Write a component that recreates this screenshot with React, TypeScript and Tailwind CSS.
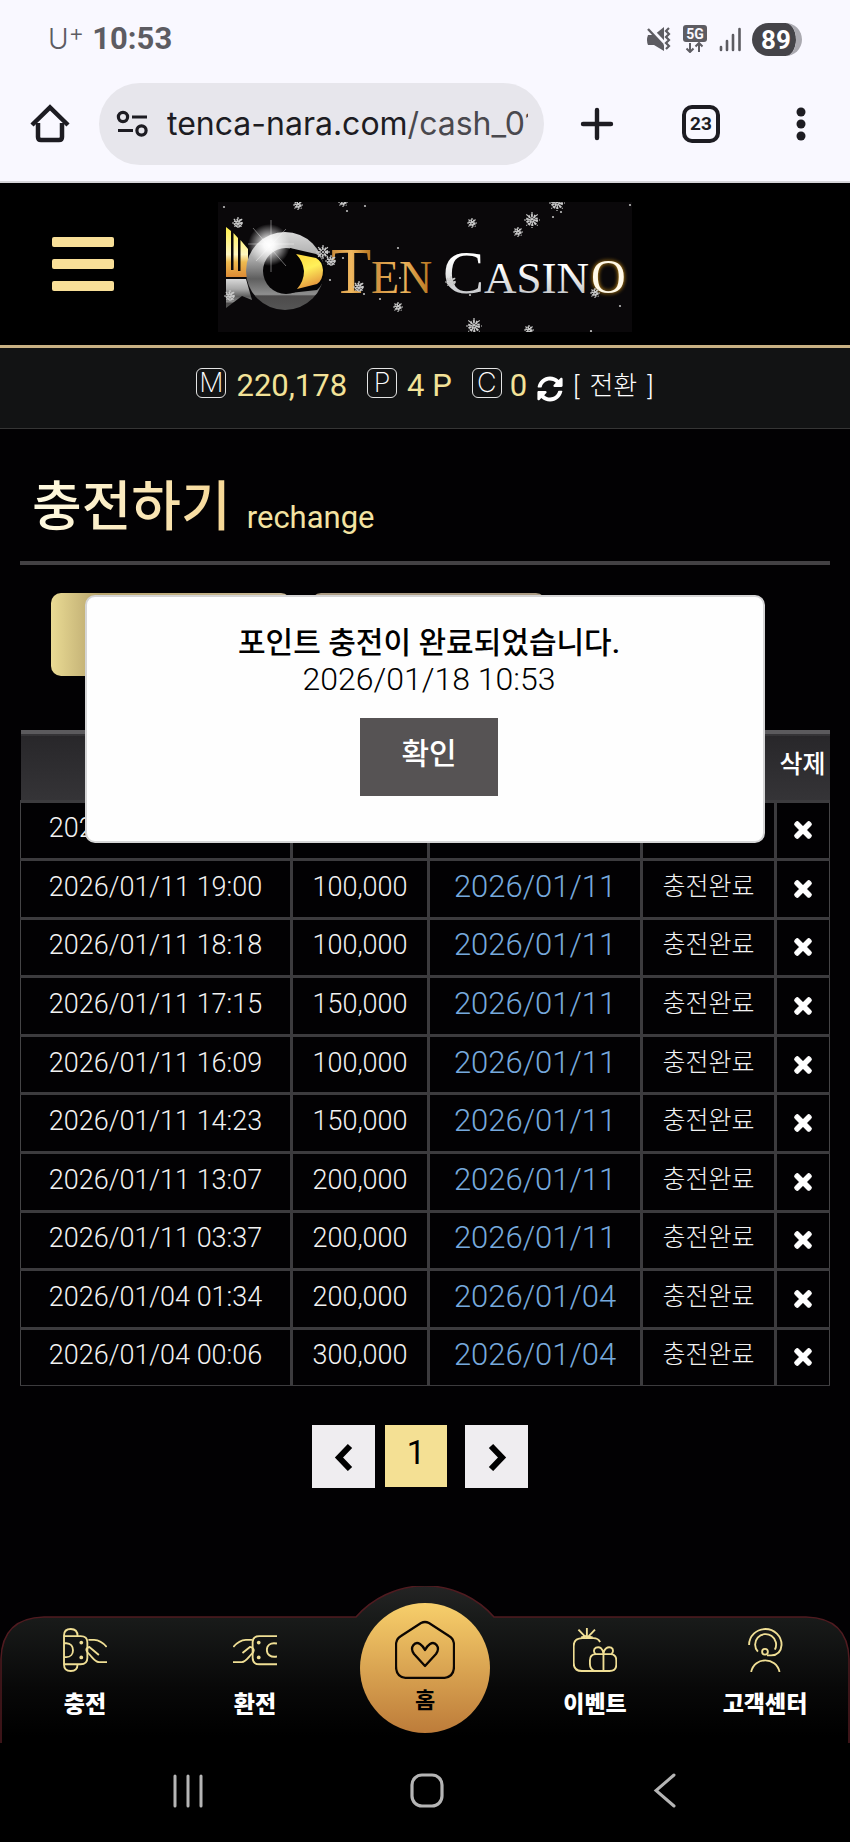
import type { ReactNode } from "react";
import { FaSyncAlt, FaTimes } from "react-icons/fa";

type Row = { requested: string; amount: string; processed: string; status: string };

const rows: Row[] = [
  { requested: "2026/01/18 10:53", amount: "", processed: "", status: "" },
  { requested: "2026/01/11 19:00", amount: "100,000", processed: "2026/01/11", status: "충전완료" },
  { requested: "2026/01/11 18:18", amount: "100,000", processed: "2026/01/11", status: "충전완료" },
  { requested: "2026/01/11 17:15", amount: "150,000", processed: "2026/01/11", status: "충전완료" },
  { requested: "2026/01/11 16:09", amount: "100,000", processed: "2026/01/11", status: "충전완료" },
  { requested: "2026/01/11 14:23", amount: "150,000", processed: "2026/01/11", status: "충전완료" },
  { requested: "2026/01/11 13:07", amount: "200,000", processed: "2026/01/11", status: "충전완료" },
  { requested: "2026/01/11 03:37", amount: "200,000", processed: "2026/01/11", status: "충전완료" },
  { requested: "2026/01/04 01:34", amount: "200,000", processed: "2026/01/04", status: "충전완료" },
  { requested: "2026/01/04 00:06", amount: "300,000", processed: "2026/01/04", status: "충전완료" },
];

function StatusBar() {
  return (
    <div className="flex h-[78px] items-center justify-between pr-12 pl-12 text-[#5d5c62]">
      <div className="flex items-center gap-2">
        <span className="flex items-start font-['Inter'] text-[28px] leading-8 font-light">
          U
          <sup className="top-0 text-[24px] leading-5">+</sup>
        </span>
        <span className="text-[31px] leading-8 font-bold">10:53</span>
      </div>
      <div className="flex items-center gap-2.5">
        <svg width="26" height="26" viewBox="0 0 26 26" fill="none" aria-hidden="true">
          <path d="M2 9 H8 L18 1 V25 L8 19 H2 Q0 14 2 9 Z" fill="#5d5c62" />
          <path d="M1 -1 L22 21" stroke="#f9f8ff" strokeWidth="3.500" />
          <path d="M2 3 L17 19" stroke="#5d5c62" strokeWidth="2.400" />
          <path d="M23 2 l-3 3 3 3 -3 3 3 3 -3 3 3 3 -3 3" stroke="#5d5c62" strokeWidth="2.200" />
        </svg>
        <svg width="26" height="28" viewBox="0 0 26 28" fill="none" aria-hidden="true">
          <rect x="1" y="0" width="24" height="17" rx="3" fill="#5d5c62" />
          <text x="13" y="13.500" textAnchor="middle" fontSize="14" fontWeight="700" fill="#f9f8ff" fontFamily="Roboto">5G</text>
          <path d="M8 18 V27 M4.500 23.500 L8 27 L11.500 23.500 M17 27 V18 M13.500 21.500 L17 18 L20.500 21.500" stroke="#5d5c62" strokeWidth="2" />
        </svg>
        <svg width="24" height="26" viewBox="0 0 24 26" stroke="#5d5c62" strokeWidth="2.600" strokeLinecap="round" aria-hidden="true">
          <path d="M3 21 V24 M9 15 V24 M15 9 V24 M21.500 3 V24" />
        </svg>
        <span className="flex h-[33px] w-[50px] items-center justify-center rounded-full border-r-[6px] border-[#aaa9b0] bg-[#454449] bg-clip-padding pt-0.5 pl-1 text-[26px] leading-8 font-bold text-white">
          89
        </span>
      </div>
    </div>
  );
}

function BrowserBar() {
  return (
    <div className="flex h-[103px] items-start pt-[5px] pl-7 text-[#1d1c22]">
      <a href="#home" aria-label="홈" className="mt-5">
        <svg width="44" height="42" viewBox="0 0 44 42" fill="none" stroke="#1d1c22" strokeWidth="4.500" strokeLinejoin="round" aria-hidden="true">
          <path d="M10 20 V34 Q10 37 13 37 H31 Q34 37 34 34 V20" />
          <path d="M4 22 L22 4.500 L40 22" strokeLinejoin="miter" />
        </svg>
      </a>
      <div className="ml-[27px] flex h-[82px] w-[445px] items-center rounded-full bg-[#e7e6ec] pr-4 pl-[17px]">
        <svg width="32" height="28" viewBox="0 0 32 28" fill="none" stroke="#1d1c22" strokeWidth="3.200" aria-hidden="true">
          <circle cx="7" cy="7" r="4.600" />
          <path d="M16 7 H31 M2 20.500 H17" />
          <circle cx="25.500" cy="20.500" r="4.600" />
        </svg>
        <span className="ml-[19px] flex-1 overflow-hidden font-['Inter'] text-[32px] leading-[48px] whitespace-nowrap">
          tenca-nara.com<span className="text-[#4a494e]">/cash_01</span>
        </span>
      </div>
      <div className="flex flex-1 items-center justify-between pt-[22px] pr-11 pl-9">
        <button type="button" aria-label="새 탭">
          <svg width="34" height="34" viewBox="0 0 34 34" stroke="#1d1c22" strokeWidth="4.400" strokeLinecap="round" aria-hidden="true">
            <path d="M17 3 V31 M3 17 H31" />
          </svg>
        </button>
        <button type="button" aria-label="탭 23개" className="mr-2 flex size-[38px] items-center justify-center rounded-[10px] border-4 border-[#1d1c22] text-[19px] leading-6 font-bold">
          23
        </button>
        <button type="button" aria-label="더보기">
          <svg width="10" height="34" viewBox="0 0 10 34" fill="#1d1c22" aria-hidden="true">
            <circle cx="5" cy="5" r="4.500" />
            <circle cx="5" cy="17" r="4.500" />
            <circle cx="5" cy="29" r="4.500" />
          </svg>
        </button>
      </div>
    </div>
  );
}

const flakes = [
  [20, 21, 6], [80, 3, 5], [125, 0, 5], [12, 94, 6], [105, 50, 7], [113, 59, 6], [141, 85, 6], [180, 105, 5],
  [254, 21, 5], [300, 30, 5], [314, 18, 8], [339, 1, 8], [233, 80, 6], [256, 124, 8], [311, 128, 5], [377, 91, 5],
];
const specks = [
  [6, 5], [129, 9], [147, 4], [125, 56], [112, 78], [146, 92], [162, 97], [180, 46], [182, 76],
  [335, 15], [343, 10], [252, 93], [402, 104], [373, 129], [412, 3],
];

function Logo() {
  return (
    <svg width="414" height="130" viewBox="0 0 414 130" role="img" aria-label="Ten Casino">
      <defs>
        <linearGradient id="comb" x1="0" y1="0" x2="0" y2="1">
          <stop offset="0" stopColor="#fff04a" />
          <stop offset="0.550" stopColor="#fff6c0" />
          <stop offset="0.700" stopColor="#eebb50" />
          <stop offset="1" stopColor="#dc8a35" />
        </linearGradient>
        <linearGradient id="ring" x1="0" y1="0" x2="0" y2="1">
          <stop offset="0" stopColor="#d8d8d8" />
          <stop offset="0.350" stopColor="#a8a8a8" />
          <stop offset="0.600" stopColor="#5e5e5e" />
          <stop offset="0.800" stopColor="#8f8f8f" />
          <stop offset="0.820" stopColor="#4d4b4b" />
          <stop offset="1" stopColor="#555" />
        </linearGradient>
        <linearGradient id="beak" x1="0" y1="0" x2="0.300" y2="1">
          <stop offset="0" stopColor="#ffd83a" />
          <stop offset="0.500" stopColor="#fff05a" />
          <stop offset="1" stopColor="#e69a3e" />
        </linearGradient>
        <linearGradient id="gold" x1="0" y1="0" x2="1" y2="0">
          <stop offset="0" stopColor="#c98a3a" />
          <stop offset="0.500" stopColor="#f0b860" />
          <stop offset="1" stopColor="#b5721c" />
        </linearGradient>
        <linearGradient id="silver" x1="0" y1="0" x2="0" y2="1">
          <stop offset="0.300" stopColor="#ffffff" />
          <stop offset="1" stopColor="#b4b6ba" />
        </linearGradient>
        <radialGradient id="shine">
          <stop offset="0" stopColor="#fff" />
          <stop offset="0.250" stopColor="#fff" stopOpacity="0.900" />
          <stop offset="1" stopColor="#fff" stopOpacity="0" />
        </radialGradient>
      </defs>
      <rect width="414" height="130" fill="#0a080a" />
      <path d="M8 25 L13 29 V68 H15.500 V31 L20 36 V69 H22.500 V38 L30 47 V75 H8 Z" fill="url(#comb)" />
      <path d="M8 77 H28 L34 98 L24 94 L8 106 Z" fill="url(#ring)" />
      <circle cx="67" cy="69" r="39" fill="url(#ring)" />
      <circle cx="68" cy="69" r="23" fill="#050405" />
      <path d="M72 46 L98 52 Q106 56 107 70 Q106 82 99 88 L72 91 Z" fill="#050405" />
      <path d="M78 52 L98 56 Q104 59 105 68 Q105 78 99 82 L79 87 Q86 79 86 69 Q85 59 78 52 Z" fill="url(#beak)" />
      <circle cx="51" cy="43" r="21" fill="url(#shine)" />
      <path d="M35 26 L68 64 M68 27 L38 59 M53 18 V70 M30 42 H76" stroke="#fff" strokeOpacity="0.500" strokeWidth="0.800" />
      <g fontFamily="Liberation Serif">
        <g fill="url(#gold)">
          <text x="113" y="91" fontSize="66">T</text>
          <text x="153" y="91" fontSize="46">EN</text>
        </g>
        <g fill="url(#silver)">
          <text x="225" y="91" fontSize="62">C</text>
          <text x="266" y="91" fontSize="45">ASIN</text>
        </g>
        <text x="373" y="91" fontSize="48" fill="#fff9e8" className="drop-shadow-[0_0_2px_#f0a818]">O</text>
      </g>
      {flakes.map(([x, y, r]) => (
        <g key={`${x}-${y}`} stroke="#c9c9c9" fill="none">
          <circle cx={x} cy={y} r={r / 2} strokeWidth={r / 2} strokeDasharray="1.500 1" />
          <path
            d={`M${x - r} ${y} H${x + r} M${x} ${y - r} V${y + r} M${x - r * 0.7} ${y - r * 0.7} L${x + r * 0.7} ${y + r * 0.7} M${x + r * 0.7} ${y - r * 0.7} L${x - r * 0.7} ${y + r * 0.7}`}
            strokeWidth="1.200"
            strokeDasharray="2 1"
          />
        </g>
      ))}
      {specks.map(([x, y]) => (
        <circle key={`${x}-${y}`} cx={x} cy={y} r="1.100" fill="#bbb" />
      ))}
    </svg>
  );
}

function Badge({ children }: { children: ReactNode }) {
  return (
    <span className="-mt-1.5 flex size-[30px] items-center justify-center rounded-md border border-[#e4e4e4] font-['Inter'] text-[27px] leading-7 font-extralight text-white">
      {children}
    </span>
  );
}

function MemberBar() {
  return (
    <div className="flex h-[84px] items-center justify-center border-t-[3px] border-b border-t-[#c9b184] border-b-[#353535] bg-[#121314] pb-1 text-[31px] leading-9 text-[#f3e298]">
      <Badge>M</Badge>
      <span className="ml-2.5">220,178</span>
      <span className="ml-5 flex items-center gap-2.5">
        <Badge>P</Badge>4 P
      </span>
      <span className="ml-5 flex items-center gap-2">
        <Badge>C</Badge>0
      </span>
      <button type="button" className="ml-2.5 flex items-center gap-2.5 text-[26px] font-light text-white">
        <FaSyncAlt className="mt-1.5 size-[26px]" aria-hidden="true" />
        <span className="flex gap-2.5"><span>[</span><span>전환</span><span>]</span></span>
      </button>
    </div>
  );
}

function HistoryTable() {
  return (
    <table className="mt-[54px] h-[656px] w-full table-fixed border-collapse text-center">
      <colgroup>
        <col className="w-[271px]" />
        <col className="w-[137px]" />
        <col className="w-[213px]" />
        <col className="w-[134px]" />
        <col />
      </colgroup>
      <thead>
        <tr className="h-[69px] border-t-4 border-t-[#5b5a5d] bg-[#2f2e31] bg-linear-to-b from-[#28272a] to-[#353437] text-[25px] text-white">
          <th scope="col" aria-label="신청일" />
          <th scope="col" aria-label="금액" />
          <th scope="col" aria-label="처리일" />
          <th scope="col" aria-label="상태" />
          <th scope="col" className="p-0 pb-1 font-medium whitespace-nowrap">삭제</th>
        </tr>
      </thead>
      <tbody className="border border-[#454446] text-[27px] leading-8 font-light text-[#f2f2f2]">
        {rows.map((row) => (
          <tr key={row.requested} className="border-y-[3px] border-[#3c3b3e] last:border-b">
            <td className="border-r-[3px] border-[#3c3b3e] p-0 pb-1">{row.requested}</td>
            <td className="border-r-[3px] border-[#3c3b3e] p-0 pb-1">{row.amount}</td>
            <td className="border-r-[3px] border-[#3c3b3e] p-0 pb-1 text-[31px] text-[#76a9dd]">{row.processed}</td>
            <td className="border-r-[3px] border-[#3c3b3e] p-0 pb-1 text-[25px]">{row.status}</td>
            <td className="p-0">
              <button type="button" aria-label="삭제" className="flex w-full items-center justify-center text-white">
                <FaTimes className="size-6 stroke-white stroke-[24px]" aria-hidden="true" />
              </button>
            </td>
          </tr>
        ))}
      </tbody>
    </table>
  );
}

function Notice() {
  return (
    <div role="dialog" aria-labelledby="notice-title" className="absolute inset-x-[85px] top-[166px] flex h-[248px] flex-col items-center rounded-[10px] border-2 border-[#d5d5d6] bg-[#fefefe] pt-7 pl-2 text-black">
      <h2 id="notice-title" className="text-[30px] leading-9 font-medium whitespace-nowrap">포인트 충전이 완료되었습니다.</h2>
      <p className="text-[32px] leading-9 font-light">2026/01/18 10:53</p>
      <button type="button" className="mt-[21px] h-[78px] w-[138px] bg-[#565354] pb-1.5 text-[30px] leading-9 font-medium text-white">확인</button>
    </div>
  );
}

function Pagination() {
  return (
    <nav aria-label="페이지" className="mt-[39px] flex justify-center pr-2.5">
      <a href="#prev" aria-label="이전" className="flex size-[63px] items-center justify-center bg-[#efedf0]">
        <svg width="20" height="28" viewBox="0 0 20 28" fill="none" stroke="#000" strokeWidth="6" aria-hidden="true">
          <path d="M16 3 L5 14.500 L16 26" />
        </svg>
      </a>
      <a href="#1" aria-current="page" className="ml-2.5 flex size-[62px] items-center justify-center bg-[#f4e094] pb-1.5 text-[33px] text-black">1</a>
      <a href="#next" aria-label="다음" className="ml-[18px] flex size-[63px] items-center justify-center bg-[#efedf0]">
        <svg width="20" height="28" viewBox="0 0 20 28" fill="none" stroke="#000" strokeWidth="6" aria-hidden="true">
          <path d="M4 3 L15 14.500 L4 26" />
        </svg>
      </a>
    </nav>
  );
}

function LineIcon({ children }: { children: ReactNode }) {
  return (
    <svg width="44" height="44" viewBox="0 0 130 130" fill="none" stroke="#f0df95" strokeWidth="5.500" aria-hidden="true">
      {children}
    </svg>
  );
}

function NavItem({ label, href, icon }: { label: string; href: string; icon: ReactNode }) {
  return (
    <a href={href} className="flex flex-col items-center gap-[17px] pt-[42px] text-[23px] leading-8 font-extrabold whitespace-nowrap text-white">
      <LineIcon>{icon}</LineIcon>
      {label}
    </a>
  );
}

function BottomNav() {
  return (
    <nav aria-label="메뉴" className="relative h-[157px]">
      <svg className="absolute inset-0 h-full w-full" viewBox="0 0 850 157" preserveAspectRatio="none" aria-hidden="true">
        <defs>
          <linearGradient id="dock" x1="0" y1="0" x2="0" y2="1">
            <stop offset="0" stopColor="#242424" />
            <stop offset="0.200" stopColor="#191b1a" />
            <stop offset="0.650" stopColor="#080808" />
            <stop offset="0.950" stopColor="#000" />
          </linearGradient>
        </defs>
        <path d="M1 158 V73 Q2 32 44 31 H356 A92 92 0 0 1 494 31 H806 Q848 32 849 73 V158" fill="url(#dock)" stroke="#501b20" strokeWidth="1.500" />
      </svg>
      <div className="relative grid h-full grid-cols-5">
        <NavItem
          label="충전"
          href="#deposit"
          icon={
            <>
              <path d="M43 24 C43 8 34 3 23 3 S3 8 3 22 V108 C3 121 12 127 23 127 S43 121 43 107" />
              <path d="M3 24 H52 Q72 24 72 42 V88 Q72 107 52 107 H3" />
              <path d="M3 45 H10 C36 45 36 86 10 86 H3" />
              <circle cx="54" cy="43" r="5.500" fill="#f0df95" stroke="none" />
              <circle cx="54" cy="87" r="5.500" fill="#f0df95" stroke="none" />
              <path d="M75 35 H92 C110 36 120 45 129 56 M130 101 H106 C94 99 88 88 78 78 C66 68 66 60 78 56 L106 80" />
            </>
          }
        />
        <NavItem
          label="환전"
          href="#withdraw"
          icon={
            <>
              <path d="M130 24 H78 Q58 24 58 42 V88 Q58 107 78 107 H130" />
              <path d="M130 46 C109 42 100 52 100 65 S111 88 130 84" />
              <circle cx="76" cy="43" r="5.500" fill="#f0df95" stroke="none" />
              <circle cx="76" cy="87" r="5.500" fill="#f0df95" stroke="none" />
              <path d="M57 35 H38 C20 36 10 45 1 56 M0 101 H26 C38 99 44 88 54 78 C66 68 62 58 50 56 L28 74" />
            </>
          }
        />
        <a href="#main" className="flex flex-col items-center pt-[17px]">
          <span className="flex size-[130px] flex-col items-center rounded-full bg-linear-to-b from-[#f7cf6b] to-[#bd7c3a] pt-[17px] text-[22px] leading-7 font-bold text-black">
            <svg width="60" height="59" viewBox="0 0 60 59" fill="none" stroke="#0c0602" strokeWidth="2.300" aria-hidden="true">
              <path d="M26 3 Q30 1 34 3 L54 16 Q59 19 59 25 V46 Q59 58 47 58 H13 Q1 58 1 46 V25 Q1 19 6 16 Z" />
              <path d="M30 46 L19 34 C14 27 20 21 25 24 Q28 26 30 30 Q32 26 35 24 C40 21 46 27 41 34 Z" strokeLinejoin="round" />
            </svg>
            <span className="mt-2">홈</span>
          </span>
        </a>
        <NavItem
          label="이벤트"
          href="#event"
          icon={
            <>
              <path d="M80 42 Q75 30 60 30 H28 Q2 30 2 54 V103 Q2 127 26 127 H108 Q128 127 128 108 V96 Q128 77 110 77 H68 Q50 77 50 96 V106 Q50 121 64 127 M90 77 V127" />
              <path d="M90 77 C89 60 79 54 68 58 C59 63 61 73 67 77 M90 77 C91 60 103 54 113 58 C121 63 119 73 113 77" />
              <path d="M41 0 V30 M16 5 L38 28 M65 5 L43 28 M24 28 L40 24 L58 28" />
            </>
          }
        />
        <NavItem
          label="고객센터"
          href="#support"
          icon={
            <>
              <path d="M18 50 A48 47 0 0 1 114 50 Q112 80 83 81 H71" />
              <path d="M44 70 A31 31 0 1 1 94 64" />
              <circle cx="65" cy="70" r="8.500" />
              <path d="M24 130 C34 84 98 84 108 130" />
            </>
          }
        />
      </div>
    </nav>
  );
}

function SystemNav() {
  return (
    <div className="flex h-[99px] items-start justify-between bg-black px-[171px] pt-7">
      <button type="button" aria-label="최근 앱">
        <svg width="34" height="38" viewBox="0 0 34 38" stroke="#b5b5b5" strokeWidth="3" strokeLinecap="round" aria-hidden="true">
          <path d="M4 5 V35 M17 5 V35 M30 5 V35" />
        </svg>
      </button>
      <button type="button" aria-label="홈 화면">
        <svg width="38" height="38" viewBox="0 0 38 38" fill="none" stroke="#b5b5b5" strokeWidth="3.200" aria-hidden="true">
          <rect x="4" y="4" width="30" height="31" rx="10" />
        </svg>
      </button>
      <button type="button" aria-label="뒤로">
        <svg width="30" height="38" viewBox="0 0 30 38" fill="none" stroke="#b5b5b5" strokeWidth="3" strokeLinecap="round" aria-hidden="true">
          <path d="M25 4 L7 19.500 L25 35" />
        </svg>
      </button>
    </div>
  );
}

export default function App() {
  return (
    <div className="flex min-h-screen flex-col bg-[#020103] font-['Roboto','Noto_Sans_CJK_KR',sans-serif]">
      <div className="border-b-2 border-[#d5d4d8] bg-[#f9f8ff]">
        <StatusBar />
        <BrowserBar />
      </div>
      <header>
        <div className="grid h-[162px] grid-cols-[1fr_auto_1fr] items-start bg-black pt-[19px]">
          <button type="button" aria-label="메뉴 열기" className="mt-[35px] ml-[52px] flex w-[62px] flex-col gap-3">
            <span className="h-2.5 w-full rounded-xs bg-[#f8df98]" />
            <span className="h-2.5 w-full rounded-xs bg-[#f8df98]" />
            <span className="h-2.5 w-full rounded-xs bg-[#f8df98]" />
          </button>
          <Logo />
        </div>
        <MemberBar />
      </header>
      <main className="relative flex-1 px-5">
        <h1 className="flex h-[136px] items-end gap-4 border-b-4 border-[#434144] pb-[17px] pl-3 text-[54px] leading-[72px] font-medium text-[#f8edc4]">
          <span className="bg-linear-to-r from-[#fffbe4] to-[#f6d794] bg-clip-text text-transparent">충전하기</span>
          <small className="pb-1.5 text-[31px] leading-10 font-normal text-[#f3e3a2]">rechange</small>
        </h1>
        <div className="mt-7 flex gap-5 pl-[31px]">
          <button type="button" aria-label="충전 신청" className="h-[83px] w-[240px] rounded-[10px] bg-linear-to-r from-[#eadb94] via-[#b8a56d] via-20% to-[#c9b99a]" />
          <button type="button" aria-label="충전 내역" className="h-[83px] w-[235px] rounded-[10px] bg-[#ab9b83]" />
        </div>
        <HistoryTable />
        <Pagination />
        <Notice />
      </main>
      <BottomNav />
      <SystemNav />
    </div>
  );
}
